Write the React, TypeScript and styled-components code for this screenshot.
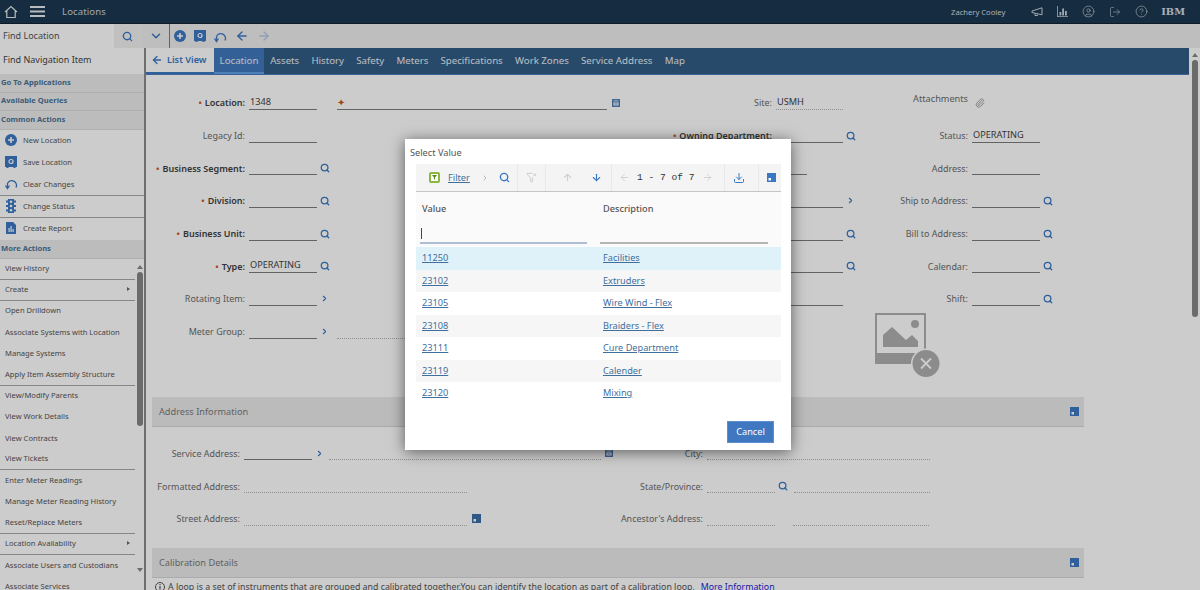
import React, { FC } from 'react';
import styled, { createGlobalStyle } from 'styled-components';
import {
  ArrowDown,
  ArrowLeft,
  ArrowRight,
  ArrowUp,
  ChevronDown,
  ChevronRight,
  CircleHelp,
  CircleUser,
  Download,
  FilterX,
  LogOut,
  Paperclip,
  Search,
} from 'lucide-react';

const blue = '#3b78c4';

const GlobalStyle = createGlobalStyle`
  html, body { margin: 0; padding: 0; background: #fff; }
  body { font-family: "Noto Sans", "Open Sans", sans-serif; }
  * { box-sizing: border-box; }
`;

const Page = styled.div`
  position: relative;
  width: 1200px;
  height: 590px;
  overflow: hidden;
  display: flex;
  flex-direction: column;
`;

/* ---------- top bar ---------- */

const TopBar = styled.header`
  height: 24px;
  background: #1c3850;
  color: #dfe6ec;
  display: flex;
  align-items: center;
  padding: 0 15px 0 4px;
  border-bottom: 1px solid #10222f;
  flex: none;
`;

const AppName = styled.span`
  margin-left: 17px;
  font-size: 9.6px;
  color: #c6d2dc;
  letter-spacing: 0.1px;
`;

const UserName = styled.span`
  margin-left: auto;
  margin-right: 26px;
  font-size: 7.6px;
  color: #d5dde4;
`;

const TopIcons = styled.div`
  display: flex;
  align-items: center;
  gap: 14px;
`;

const IbmMark = styled.span`
  margin-left: -1px;
  font-family: "DejaVu Serif", serif;
  font-weight: 700;
  font-size: 9.8px;
  color: #d5dde4;
`;

/* ---------- action bar ---------- */

const ActionBar = styled.div`
  height: 24px;
  background: #eeeeee;
  display: flex;
  align-items: stretch;
  flex: none;
`;

const FindBox = styled.div`
  width: 114px;
  background: #ffffff;
  font-size: 9px;
  color: #555;
  display: flex;
  align-items: center;
  padding: 0 0 2px 3px;
`;

const BarButton = styled.div<{ $w: number; $bg: string; $pr?: number }>`
  width: ${(p) => p.$w}px;
  background: ${(p) => p.$bg};
  padding-right: ${(p) => p.$pr ?? 0}px;
  display: flex;
  align-items: center;
  justify-content: center;
`;

const BarActions = styled.div`
  flex: 1;
  border-left: 1px solid #7d7d7d;
  display: flex;
  align-items: center;
  gap: 8px;
  padding-left: 4px;
`;

/* ---------- body ---------- */

const Body = styled.div`
  flex: 1;
  min-height: 0;
  display: flex;
`;

const Sidebar = styled.aside`
  width: 146px;
  flex: none;
  border-right: 2px solid #8b8b8b;
  background: #fff;
  display: flex;
  flex-direction: column;
  overflow: hidden;
`;

const FindNav = styled.div`
  height: 26px;
  font-size: 9px;
  color: #444;
  display: flex;
  align-items: center;
  padding: 0 0 3px 3px;
  flex: none;
`;

const SideHeader = styled.div<{ $h?: number }>`
  height: ${(p) => p.$h ?? 18.5}px;
  background: #ececec;
  border-bottom: 1px solid #dcdcdc;
  color: #4b7497;
  font-size: 7.6px;
  font-weight: 700;
  display: flex;
  align-items: center;
  padding: 0 0 2px 1px;
  flex: none;
`;

const CommonItem = styled.div<{ $divider?: boolean }>`
  height: 22px;
  display: flex;
  align-items: center;
  font-size: 7.6px;
  color: #555;
  padding-bottom: 1px;
  border-bottom: ${(p) => (p.$divider ? '1px solid #a8a8a8' : 'none')};
  flex: none;
`;

const CommonIcon = styled.span`
  width: 23px;
  display: flex;
  justify-content: center;
  padding-left: 3px;
  padding-right: 4px;
`;

const MoreWrap = styled.div`
  flex: 1;
  min-height: 0;
  display: flex;
  overflow: hidden;
`;

const MoreList = styled.div`
  width: 135px;
  flex: none;
`;

const MoreItem = styled.div<{ $divider?: boolean }>`
  height: 21.2px;
  display: flex;
  align-items: center;
  justify-content: space-between;
  font-size: 7.6px;
  color: #555;
  padding: 0 5px 2px;
  border-bottom: ${(p) => (p.$divider ? '1px solid #a8a8a8' : 'none')};
`;

const Caret = styled.span`
  width: 0;
  height: 0;
  border-left: 3px solid #666;
  border-top: 2px solid transparent;
  border-bottom: 2px solid transparent;
`;

const ScrollTrack = styled.div<{ $w: number }>`
  width: ${(p) => p.$w}px;
  flex: none;
  display: flex;
  flex-direction: column;
  align-items: center;
`;

const ArrowTip = styled.span<{ $down?: boolean; $top: number }>`
  margin-top: ${(p) => p.$top}px;
  width: 0;
  height: 0;
  border-left: 3px solid transparent;
  border-right: 3px solid transparent;
  ${(p) => (p.$down ? 'border-top: 4px solid #888;' : 'border-bottom: 4px solid #888;')}
`;

const ScrollThumb = styled.div<{ $h: number; $w: number }>`
  width: ${(p) => p.$w}px;
  height: ${(p) => p.$h}px;
  margin-top: 3px;
  background: #868686;
  border-radius: 3px;
`;

/* ---------- main ---------- */

const Main = styled.main`
  width: 1043px;
  flex: none;
  display: flex;
  flex-direction: column;
  overflow: hidden;
`;

const TabBar = styled.nav`
  height: 27px;
  flex: none;
  background: #315c85;
  border-bottom: 1px solid #4a7fc0;
  display: flex;
  align-items: stretch;
  font-size: 9.7px;
  color: #e7edf3;
`;

const ListViewTab = styled.div`
  width: 68px;
  background: #fff;
  color: ${blue};
  font-weight: 600;
  font-size: 9.2px;
  display: flex;
  align-items: center;
  gap: 4px;
  padding: 0 0 1px 5px;
  border-bottom: 2px solid #3b78c4;
`;

const Tab = styled.div<{ $active?: boolean }>`
  display: flex;
  align-items: center;
  padding: 0 6.1px 1px;
  background: ${(p) => (p.$active ? '#4279bf' : 'transparent')};
  ${(p) => (p.$active ? 'border-bottom: 2px solid #62a0e6; padding: 0 5.6px;' : '')}
`;

const FormGrid = styled.section`
  display: grid;
  grid-template-columns: 190px 290px 244px 1fr;
  grid-auto-rows: 32.7px;
  padding-top: 11.5px;
  margin-bottom: 48.5px;
  flex: none;
`;

const AddressGrid = styled.div`
  display: grid;
  grid-template-columns: 480px 1fr;
  grid-auto-rows: 32.7px;
  padding-top: 10.5px;
  margin-bottom: 12.5px;
  flex: none;
`;

const Field = styled.div`
  display: flex;
  align-items: center;
  min-width: 0;
  position: relative;
`;

const Label = styled.label<{ $w: number; $bold?: boolean }>`
  width: ${(p) => p.$w}px;
  flex: none;
  text-align: right;
  white-space: nowrap;
  font-size: ${(p) => (p.$bold ? 9 : 8.95)}px;
  font-weight: ${(p) => (p.$bold ? 600 : 400)};
  color: ${(p) => (p.$bold ? '#3f3f3f' : '#6c6c6c')};
  margin-right: 4px;
  direction: rtl;
`;

const LabelText = styled.span`
  direction: ltr;
  unicode-bidi: isolate;
`;

const Star = styled.span`
  color: #d2561d;
  font-size: 9px;
  margin-right: 3px;
`;

const ValueBox = styled.div<{ $w: number; $dotted?: boolean; $ml?: number }>`
  width: ${(p) => p.$w}px;
  height: 14px;
  flex: none;
  margin-left: ${(p) => p.$ml ?? 0}px;
  font-size: 9.2px;
  line-height: 12px;
  padding-left: 1px;
  color: #444;
  border-bottom: ${(p) => (p.$dotted ? '1px dotted #b4b4b4' : '1.5px solid #7c7c7c')};
`;

const FieldIcon = styled.span<{ $ml?: number }>`
  margin-left: ${(p) => p.$ml ?? 3}px;
  display: flex;
  align-items: center;
  color: ${blue};
`;

const AttachLabel = styled.span`
  width: 98px;
  text-align: right;
  font-size: 9.2px;
  color: #6c6c6c;
  margin: -8px 7px 0 0;
`;

const PhotoSlot = styled.div`
  margin: -2px 0 0 5px;
  align-self: flex-start;
`;

const SectionBand = styled.div`
  width: 932px;
  height: 30px;
  flex: none;
  margin-left: 6px;
  background: #eaeaea;
  border-bottom: 1px solid #d6d6d6;
  display: flex;
  align-items: center;
  justify-content: space-between;
  padding: 0 5px 0 7px;
  font-size: 9.2px;
  color: #7a7a7a;
`;

const Notice = styled.p`
  margin: 3px 0 0 9px;
  display: flex;
  align-items: center;
  gap: 3px;
  font-size: 8.8px;
  color: #555;
  white-space: nowrap;
`;

const MoreInfo = styled.a`
  margin-left: 3px;
  color: #1f1fd6;
`;

/* ---------- dialog ---------- */

const Overlay = styled.div`
  position: absolute;
  inset: 0;
  background: rgba(0, 0, 0, 0.2);
`;

const Dialog = styled.div`
  position: absolute;
  left: 405px;
  top: 139px;
  width: 386px;
  height: 311px;
  background: #fff;
  box-shadow: 0 2px 14px rgba(0, 0, 0, 0.55);
  padding: 0 10px 0 11px;
  display: flex;
  flex-direction: column;
`;

const DialogTitle = styled.div`
  height: 25px;
  margin-left: -6px;
  padding-top: 1px;
  display: flex;
  align-items: center;
  font-size: 9.2px;
  color: #555;
  flex: none;
`;

const PickerBar = styled.div`
  height: 28px;
  flex: none;
  background: #f4f4f4;
  border-bottom: 1px solid #c4c4c4;
  display: flex;
`;

const PickerCell = styled.div<{ $w: number; $gap?: number; $last?: boolean; $start?: number }>`
  width: ${(p) => p.$w}px;
  flex: none;
  display: flex;
  align-items: center;
  justify-content: ${(p) => (p.$start ? 'flex-start' : 'center')};
  padding-left: ${(p) => p.$start ?? 0}px;
  gap: ${(p) => p.$gap ?? 0}px;
  border-right: ${(p) => (p.$last ? 'none' : '1px solid #e9e9e9')};
`;

const FilterLink = styled.a`
  font-size: 9.2px;
  color: #3f6f9c;
  text-decoration: underline;
  margin-left: 8px;
`;

const Pager = styled.span`
  font-family: "Liberation Mono", monospace;
  font-size: 9.6px;
  color: #333;
  white-space: nowrap;
`;

const HeadArea = styled.div`
  height: 55px;
  flex: none;
  background: #fafafa;
  padding: 10px 0 0 6px;
  display: grid;
  grid-template-columns: 181px 1fr;
  grid-template-rows: 14px 1fr;
  font-size: 9.2px;
  font-weight: 500;
  color: #555;
`;

const FilterInput = styled.div<{ $w: number; $ml: number; $focus?: boolean }>`
  width: ${(p) => p.$w}px;
  margin-left: ${(p) => p.$ml}px;
  height: 19px;
  margin-top: 9px;
  padding: 3px 0 0 1px;
  border-bottom: 2px solid ${(p) => (p.$focus ? '#adbdd4' : '#b5b5b5')};
`;

const Cursor = styled.span`
  display: block;
  width: 1px;
  height: 11px;
  background: #444;
`;

const ValueRow = styled.div<{ $bg: string }>`
  height: 22.5px;
  flex: none;
  background: ${(p) => p.$bg};
  display: grid;
  grid-template-columns: 181px 1fr;
  align-items: center;
  padding: 0 0 1px 6px;
  font-size: 9.2px;
`;

const RowLink = styled.a`
  color: #3f6f9c;
  text-decoration: underline;
`;

const DialogFoot = styled.div`
  flex: 1;
  display: flex;
  align-items: flex-end;
  justify-content: flex-end;
  padding: 0 7px 7px 0;
`;

const CancelButton = styled.button`
  width: 47px;
  height: 22px;
  border: 1px solid #5d8fcc;
  background: #3f78c0;
  color: #fff;
  font: 9.2px "Noto Sans", sans-serif;
  padding: 0 0 1px;
`;

/* ---------- drawn icons ---------- */

const HomeIcon = () => (
  <svg width="14" height="14" viewBox="0 0 14 14" fill="none" stroke="#e6ebef" strokeWidth="1.2">
    <path d="M1 7 7 1.5 13 7M2.8 6v6.5h8.4V6" />
  </svg>
);

const MenuBars = () => (
  <svg width="15" height="11" viewBox="0 0 15 11" fill="#e6ebef" style={{ marginLeft: 12 }}>
    <path d="M0 0h15v2H0zM0 4.500h15v2H0zM0 9h15v2H0z" />
  </svg>
);

const MegaphoneIcon = () => (
  <svg width="12" height="10" viewBox="0 0 12 10" fill="none" stroke="#c9d3db" strokeWidth="1">
    <path d="M1 4 11 .8v7L1 5.500zM4 6.500V8.500h2.500V7.500" />
  </svg>
);

const BarsIcon = () => (
  <svg width="11" height="11" viewBox="0 0 11 11" fill="#c9d3db">
    <path d="M0 0h.8v10.200H11v.8H0zM2.500 6h1.800v3.500H2.500zM5.200 2.500H7v7H5.200zM8 5h1.800v4.500H8z" />
  </svg>
);

const PlusCircle: FC<{ size?: number }> = ({ size = 12 }) => (
  <svg width={size} height={size} viewBox="0 0 12 12">
    <circle cx="6" cy="6" r="6" fill={blue} />
    <path d="M6 3v6M3 6h6" stroke="#fff" strokeWidth="1.6" />
  </svg>
);

const SaveIcon: FC<{ size?: number }> = ({ size = 12 }) => (
  <svg width={size} height={size} viewBox="0 0 12 12">
    <path d="M0 0h12v11H10.500v1h-2v-1h-5v1h-2v-1H0z" fill={blue} />
    <circle cx="6" cy="5.500" r="2" fill="none" stroke="#fff" strokeWidth="1.200" />
  </svg>
);

const ClearIcon = () => (
  <svg width="13" height="13" viewBox="0 0 13 13" fill="none" stroke={blue} strokeWidth="1.300">
    <path d="M11 10.500A4.700 4.700 0 1 0 2.500 6.500V11" />
    <path d="M.5 8.500 2.500 11.500 4.500 8.500" />
  </svg>
);

const StatusIcon = () => (
  <svg width="10" height="14" viewBox="0 0 10 14">
    <path d="M2 0h6v14H2z" fill={blue} />
    <path d="M0 1.500h2v2H0zM8 1.500h2v2H8zM0 6h2v2H0zM8 6h2v2H8zM0 10.500h2v2H0zM8 10.500h2v2H8z" fill={blue} />
    <circle cx="5" cy="2.700" r="1.300" fill="#fff" />
    <circle cx="5" cy="7" r="1.300" fill="#fff" />
    <circle cx="5" cy="11.300" r="1.300" fill="#fff" />
  </svg>
);

const ReportIcon = () => (
  <svg width="10" height="12" viewBox="0 0 10 12">
    <path d="M0 0h7l3 3v9H0z" fill={blue} />
    <path d="M2.500 6h1.200v4H2.500zM4.500 4h1.200v6H4.500zM6.500 7h1.200v3H6.500z" fill="#fff" />
  </svg>
);

const SquareTick: FC<{ color?: string }> = ({ color = blue }) => (
  <svg width="9" height="9" viewBox="0 0 9 9">
    <path d="M0 0h9v9H0z" fill={color} />
    <path d="M1.500 5h2.500v2.500H1.500z" fill="#fff" />
  </svg>
);

const LongDescIcon = () => (
  <svg width="8" height="8" viewBox="0 0 8 8">
    <path d="M0 0h8v8H0z" fill="#4d7eb8" />
    <path d="M1.500 1.500h5v.8h-5zM1.500 3.500h5v3h-5z" fill="#fff" />
    <path d="M2.500 4.500h3v1h-3z" fill="#4d7eb8" />
  </svg>
);

const GreenFilter = () => (
  <svg width="11" height="11" viewBox="0 0 11 11">
    <rect width="11" height="11" rx="2" fill="#8ab83f" />
    <rect x="2" y="2" width="7" height="7" fill="#fff" />
    <path d="M3 3h5L6 5.500V8L5 7V5.500z" fill="#5c8a1e" />
  </svg>
);

const PhotoMissing = () => (
  <svg width="66" height="66" viewBox="0 0 66 66">
    <path d="M0 0h51v51H0z" fill="#b0b0b0" />
    <path d="M2 2h47v38H2z" fill="#fff" />
    <path d="M8 34V22l9-8 14 13 6-5 6 6V34z" fill="#b0b0b0" />
    <circle cx="40" cy="11" r="4" fill="#b0b0b0" />
    <circle cx="51" cy="50.500" r="15" fill="#fff" />
    <circle cx="51" cy="50.500" r="13.500" fill="#b0b0b0" />
    <path d="M46 45.500l10 10M56 45.500l-10 10" stroke="#fff" strokeWidth="1.800" />
  </svg>
);

const Find: FC<{ size?: number }> = ({ size = 10 }) => <Search size={size} strokeWidth={3} color={blue} />;

/* ---------- data ---------- */

const commonActions = [
  { label: 'New Location', icon: <PlusCircle /> },
  { label: 'Save Location', icon: <SaveIcon /> },
  { label: 'Clear Changes', icon: <ClearIcon />, divider: true },
  { label: 'Change Status', icon: <StatusIcon />, divider: true },
  { label: 'Create Report', icon: <ReportIcon /> },
];

const moreActions = [
  { label: 'View History', divider: true },
  { label: 'Create', divider: true, sub: true },
  { label: 'Open Drilldown' },
  { label: 'Associate Systems with Location' },
  { label: 'Manage Systems' },
  { label: 'Apply Item Assembly Structure', divider: true },
  { label: 'View/Modify Parents' },
  { label: 'View Work Details' },
  { label: 'View Contracts' },
  { label: 'View Tickets', divider: true },
  { label: 'Enter Meter Readings' },
  { label: 'Manage Meter Reading History' },
  { label: 'Reset/Replace Meters', divider: true },
  { label: 'Location Availability', divider: true, sub: true },
  { label: 'Associate Users and Custodians' },
  { label: 'Associate Services' },
];

const tabs = ['Assets', 'History', 'Safety', 'Meters', 'Specifications', 'Work Zones', 'Service Address', 'Map'];

const values = [
  ['11250', 'Facilities'],
  ['23102', 'Extruders'],
  ['23105', 'Wire Wind - Flex'],
  ['23108', 'Braiders - Flex'],
  ['23111', 'Cure Department'],
  ['23119', 'Calender'],
  ['23120', 'Mixing'],
];

const FieldLabel: FC<{ w: number; bold?: boolean; req?: boolean; children: React.ReactNode }> = ({
  w,
  bold,
  req,
  children,
}) => (
  <Label $w={w} $bold={bold}>
    <LabelText>
      {req && <Star>•</Star>}
      {children}:
    </LabelText>
  </Label>
);

const App: FC = () => (
  <Page>
    <GlobalStyle />
    <TopBar>
      <HomeIcon />
      <MenuBars />
      <AppName>Locations</AppName>
      <UserName>Zachery Cooley</UserName>
      <TopIcons>
        <MegaphoneIcon />
        <BarsIcon />
        <CircleUser size={13} color="#c9d3db" strokeWidth={1.2} />
        <LogOut size={12} color="#c9d3db" strokeWidth={1.2} />
        <CircleHelp size={13} color="#c9d3db" strokeWidth={1.2} />
        <IbmMark>IBM</IbmMark>
      </TopIcons>
    </TopBar>

    <ActionBar>
      <FindBox>Find Location</FindBox>
      <BarButton $w={29} $bg="#f0f0f0" $pr={3}>
        <Find size={11} />
      </BarButton>
      <BarButton $w={26} $bg="#eeeeee">
        <ChevronDown size={14} color={blue} strokeWidth={2.6} />
      </BarButton>
      <BarActions>
        <PlusCircle />
        <SaveIcon />
        <ClearIcon />
        <ArrowLeft size={14} color={blue} strokeWidth={2.4} />
        <ArrowRight size={14} color="#b5c9e2" strokeWidth={2.4} />
      </BarActions>
    </ActionBar>

    <Body>
      <Sidebar>
        <FindNav>Find Navigation Item</FindNav>
        <SideHeader>Go To Applications</SideHeader>
        <SideHeader>Available Queries</SideHeader>
        <SideHeader>Common Actions</SideHeader>
        {commonActions.map((a) => (
          <CommonItem key={a.label} $divider={a.divider}>
            <CommonIcon>{a.icon}</CommonIcon>
            {a.label}
          </CommonItem>
        ))}
        <SideHeader $h={19}>More Actions</SideHeader>
        <MoreWrap>
          <MoreList>
            {moreActions.map((a) => (
              <MoreItem key={a.label} $divider={a.divider}>
                {a.label}
                {a.sub && <Caret />}
              </MoreItem>
            ))}
          </MoreList>
          <ScrollTrack $w={9}>
            <ArrowTip $top={6} />
            <ScrollThumb $h={154} $w={6} />
            <ArrowTip $down $top={142} />
          </ScrollTrack>
        </MoreWrap>
      </Sidebar>

      <Main>
        <TabBar>
          <ListViewTab>
            <ArrowLeft size={12} strokeWidth={2.6} />
            List View
          </ListViewTab>
          <Tab $active>Location</Tab>
          {tabs.map((t) => (
            <Tab key={t}>{t}</Tab>
          ))}
        </TabBar>

        <FormGrid>
          <Field>
            <FieldLabel w={99} bold req>
              Location
            </FieldLabel>
            <ValueBox $w={68}>1348</ValueBox>
          </Field>
          <Field>
            <ValueBox $w={270} $ml={1} style={{ paddingLeft: 0 }}>
              <Star style={{ fontSize: 10 }}>✦</Star>
            </ValueBox>
            <FieldIcon $ml={5}>
              <LongDescIcon />
            </FieldIcon>
          </Field>
          <Field>
            <FieldLabel w={146}>Site</FieldLabel>
            <ValueBox $w={67} $dotted>
              USMH
            </ValueBox>
          </Field>
          <Field>
            <AttachLabel>Attachments</AttachLabel>
            <Paperclip size={10} color="#777" strokeWidth={1.6} />
          </Field>

          <Field>
            <FieldLabel w={99}>Legacy Id</FieldLabel>
            <ValueBox $w={68} />
          </Field>
          <Field />
          <Field>
            <FieldLabel w={146} bold req>
              Owning Department
            </FieldLabel>
            <ValueBox $w={67} />
            <FieldIcon><Find /></FieldIcon>
          </Field>
          <Field>
            <FieldLabel w={98}>Status</FieldLabel>
            <ValueBox $w={68}>OPERATING</ValueBox>
          </Field>

          <Field>
            <FieldLabel w={99} bold req>
              Business Segment
            </FieldLabel>
            <ValueBox $w={68} />
            <FieldIcon><Find /></FieldIcon>
          </Field>
          <Field />
          <Field>
            <FieldLabel w={146}>Type</FieldLabel>
            <ValueBox $w={31} />
          </Field>
          <Field>
            <FieldLabel w={98}>Address</FieldLabel>
            <ValueBox $w={68} />
          </Field>

          <Field>
            <FieldLabel w={99} bold req>
              Division
            </FieldLabel>
            <ValueBox $w={68} />
            <FieldIcon><Find /></FieldIcon>
          </Field>
          <Field />
          <Field>
            <FieldLabel w={146}>Parent</FieldLabel>
            <ValueBox $w={67} />
            <FieldIcon>
              <ChevronRight size={9} strokeWidth={3} />
            </FieldIcon>
          </Field>
          <Field>
            <FieldLabel w={98}>Ship to Address</FieldLabel>
            <ValueBox $w={68} />
            <FieldIcon><Find /></FieldIcon>
          </Field>

          <Field>
            <FieldLabel w={99} bold req>
              Business Unit
            </FieldLabel>
            <ValueBox $w={68} />
            <FieldIcon><Find /></FieldIcon>
          </Field>
          <Field />
          <Field>
            <FieldLabel w={146}>Failure Class</FieldLabel>
            <ValueBox $w={67} />
            <FieldIcon><Find /></FieldIcon>
          </Field>
          <Field>
            <FieldLabel w={98}>Bill to Address</FieldLabel>
            <ValueBox $w={68} />
            <FieldIcon><Find /></FieldIcon>
          </Field>

          <Field>
            <FieldLabel w={99} bold req>
              Type
            </FieldLabel>
            <ValueBox $w={68}>OPERATING</ValueBox>
            <FieldIcon><Find /></FieldIcon>
          </Field>
          <Field />
          <Field>
            <FieldLabel w={146}>Problem Code</FieldLabel>
            <ValueBox $w={67} />
            <FieldIcon><Find /></FieldIcon>
          </Field>
          <Field>
            <FieldLabel w={98}>Calendar</FieldLabel>
            <ValueBox $w={68} />
            <FieldIcon><Find /></FieldIcon>
          </Field>

          <Field>
            <FieldLabel w={99}>Rotating Item</FieldLabel>
            <ValueBox $w={68} />
            <FieldIcon>
              <ChevronRight size={9} strokeWidth={3} />
            </FieldIcon>
          </Field>
          <Field />
          <Field>
            <FieldLabel w={146}>GL Account</FieldLabel>
            <ValueBox $w={67} />
          </Field>
          <Field>
            <FieldLabel w={98}>Shift</FieldLabel>
            <ValueBox $w={68} />
            <FieldIcon><Find /></FieldIcon>
          </Field>

          <Field>
            <FieldLabel w={99}>Meter Group</FieldLabel>
            <ValueBox $w={68} />
            <FieldIcon>
              <ChevronRight size={9} strokeWidth={3} />
            </FieldIcon>
          </Field>
          <Field>
            <ValueBox $w={270} $ml={1} $dotted />
          </Field>
          <Field />
          <Field>
            <PhotoSlot>
              <PhotoMissing />
            </PhotoSlot>
          </Field>
        </FormGrid>

        <SectionBand>
          Address Information
          <SquareTick />
        </SectionBand>
        <AddressGrid>
          <Field>
            <FieldLabel w={94}>Service Address</FieldLabel>
            <ValueBox $w={68} />
            <FieldIcon>
              <ChevronRight size={9} strokeWidth={3} />
            </FieldIcon>
            <ValueBox $w={272} $ml={5} $dotted />
            <FieldIcon $ml={4}>
              <LongDescIcon />
            </FieldIcon>
          </Field>
          <Field>
            <FieldLabel w={77}>City</FieldLabel>
            <ValueBox $w={68} $dotted />
            <ValueBox $w={155} $dotted />
          </Field>
          <Field>
            <FieldLabel w={94}>Formatted Address</FieldLabel>
            <ValueBox $w={223} $dotted />
          </Field>
          <Field>
            <FieldLabel w={77}>State/Province</FieldLabel>
            <ValueBox $w={68} $dotted />
            <FieldIcon><Find /></FieldIcon>
            <ValueBox $w={136} $ml={6} $dotted />
          </Field>
          <Field>
            <FieldLabel w={94}>Street Address</FieldLabel>
            <ValueBox $w={223} $dotted />
            <FieldIcon $ml={5}>
              <SquareTick color="#3b6ea8" />
            </FieldIcon>
          </Field>
          <Field>
            <FieldLabel w={77}>Ancestor's Address</FieldLabel>
            <ValueBox $w={68} $dotted />
            <ValueBox $w={136} $ml={18} $dotted />
          </Field>
        </AddressGrid>

        <SectionBand>
          Calibration Details
          <SquareTick />
        </SectionBand>
        <Notice>
          <svg width="10" height="10" viewBox="0 0 10 10" fill="none" stroke="#555">
            <circle cx="5" cy="5" r="4.500" />
            <path d="M5 4v3.500M5 2v1" strokeWidth="1.200" />
          </svg>
          A loop is a set of instruments that are grouped and calibrated together.You can identify the location as part of
          a calibration loop.
          <MoreInfo>More Information</MoreInfo>
        </Notice>
      </Main>

      <ScrollTrack $w={11}>
        <ArrowTip $top={5} />
        <ScrollThumb $h={257} $w={6} />
      </ScrollTrack>
    </Body>

    <Overlay />

    <Dialog>
      <DialogTitle>Select Value</DialogTitle>
      <PickerBar>
        <PickerCell $w={102} $start={13}>
          <GreenFilter />
          <FilterLink>Filter</FilterLink>
          <ChevronRight size={8} color="#999" strokeWidth={2} style={{ marginLeft: 11 }} />
          <Search size={11} color={blue} strokeWidth={3} style={{ marginLeft: 10 }} />
        </PickerCell>
        <PickerCell $w={28}>
          <FilterX size={11} color="#c8c8c8" strokeWidth={2} />
        </PickerCell>
        <PickerCell $w={66} $start={16} $gap={18}>
          <ArrowUp size={11} color="#cfcfcf" strokeWidth={2.4} />
          <ArrowDown size={11} color={blue} strokeWidth={2.4} />
        </PickerCell>
        <PickerCell $w={113} $start={7} $gap={7}>
          <ArrowLeft size={11} color="#cfcfcf" strokeWidth={2} />
          <Pager>1 - 7 of 7</Pager>
          <ArrowRight size={11} color="#cfcfcf" strokeWidth={2} />
        </PickerCell>
        <PickerCell $w={34} $start={8}>
          <Download size={12} color={blue} strokeWidth={2} />
        </PickerCell>
        <PickerCell $w={22} $last $start={8}>
          <SquareTick />
        </PickerCell>
      </PickerBar>
      <HeadArea>
        <span>Value</span>
        <span>Description</span>
        <FilterInput $w={167} $ml={-2} $focus>
          <Cursor />
        </FilterInput>
        <FilterInput $w={168} $ml={-3} />
      </HeadArea>
      {values.map(([value, description], i) => (
        <ValueRow key={value} $bg={i === 0 ? '#dff2fa' : i % 2 ? '#f6f6f6' : '#ffffff'}>
          <span>
            <RowLink>{value}</RowLink>
          </span>
          <span>
            <RowLink>{description}</RowLink>
          </span>
        </ValueRow>
      ))}
      <DialogFoot>
        <CancelButton>Cancel</CancelButton>
      </DialogFoot>
    </Dialog>
  </Page>
);

export default App;
